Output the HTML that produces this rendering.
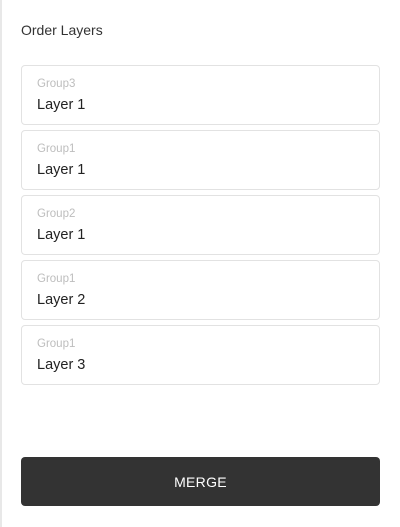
<!DOCTYPE html>
<html><head><style>
body{margin:0;width:400px;height:527px;background:#fff;font-family:"Liberation Sans",sans-serif;position:relative;overflow:hidden}
.edge{position:absolute;left:0;top:0;width:2px;height:527px;background:#e8e8e8}
.title{position:absolute;left:21px;top:22px;font-size:14px;color:#333}
.card{position:absolute;left:21px;width:357px;height:58px;border:1px solid #e2e2e2;border-radius:4px}
.g{position:absolute;left:15px;top:12px;font-size:11.5px;color:#bdbdbd}
.l{position:absolute;left:15px;top:31px;font-size:14.5px;color:#222}
.btn{position:absolute;left:21px;top:457px;width:359px;height:49px;background:#333;border-radius:4px;color:#fff;font-size:14px;text-align:center;line-height:50px;letter-spacing:.3px}
</style></head><body>
<div class="edge"></div>
<div class="title">Order Layers</div>
<div class="card" style="top:65px"><div class="g">Group3</div><div class="l">Layer 1</div></div>
<div class="card" style="top:130px"><div class="g">Group1</div><div class="l">Layer 1</div></div>
<div class="card" style="top:195px"><div class="g">Group2</div><div class="l">Layer 1</div></div>
<div class="card" style="top:260px"><div class="g">Group1</div><div class="l">Layer 2</div></div>
<div class="card" style="top:325px"><div class="g">Group1</div><div class="l">Layer 3</div></div>
<div class="btn">MERGE</div>
</body></html>
